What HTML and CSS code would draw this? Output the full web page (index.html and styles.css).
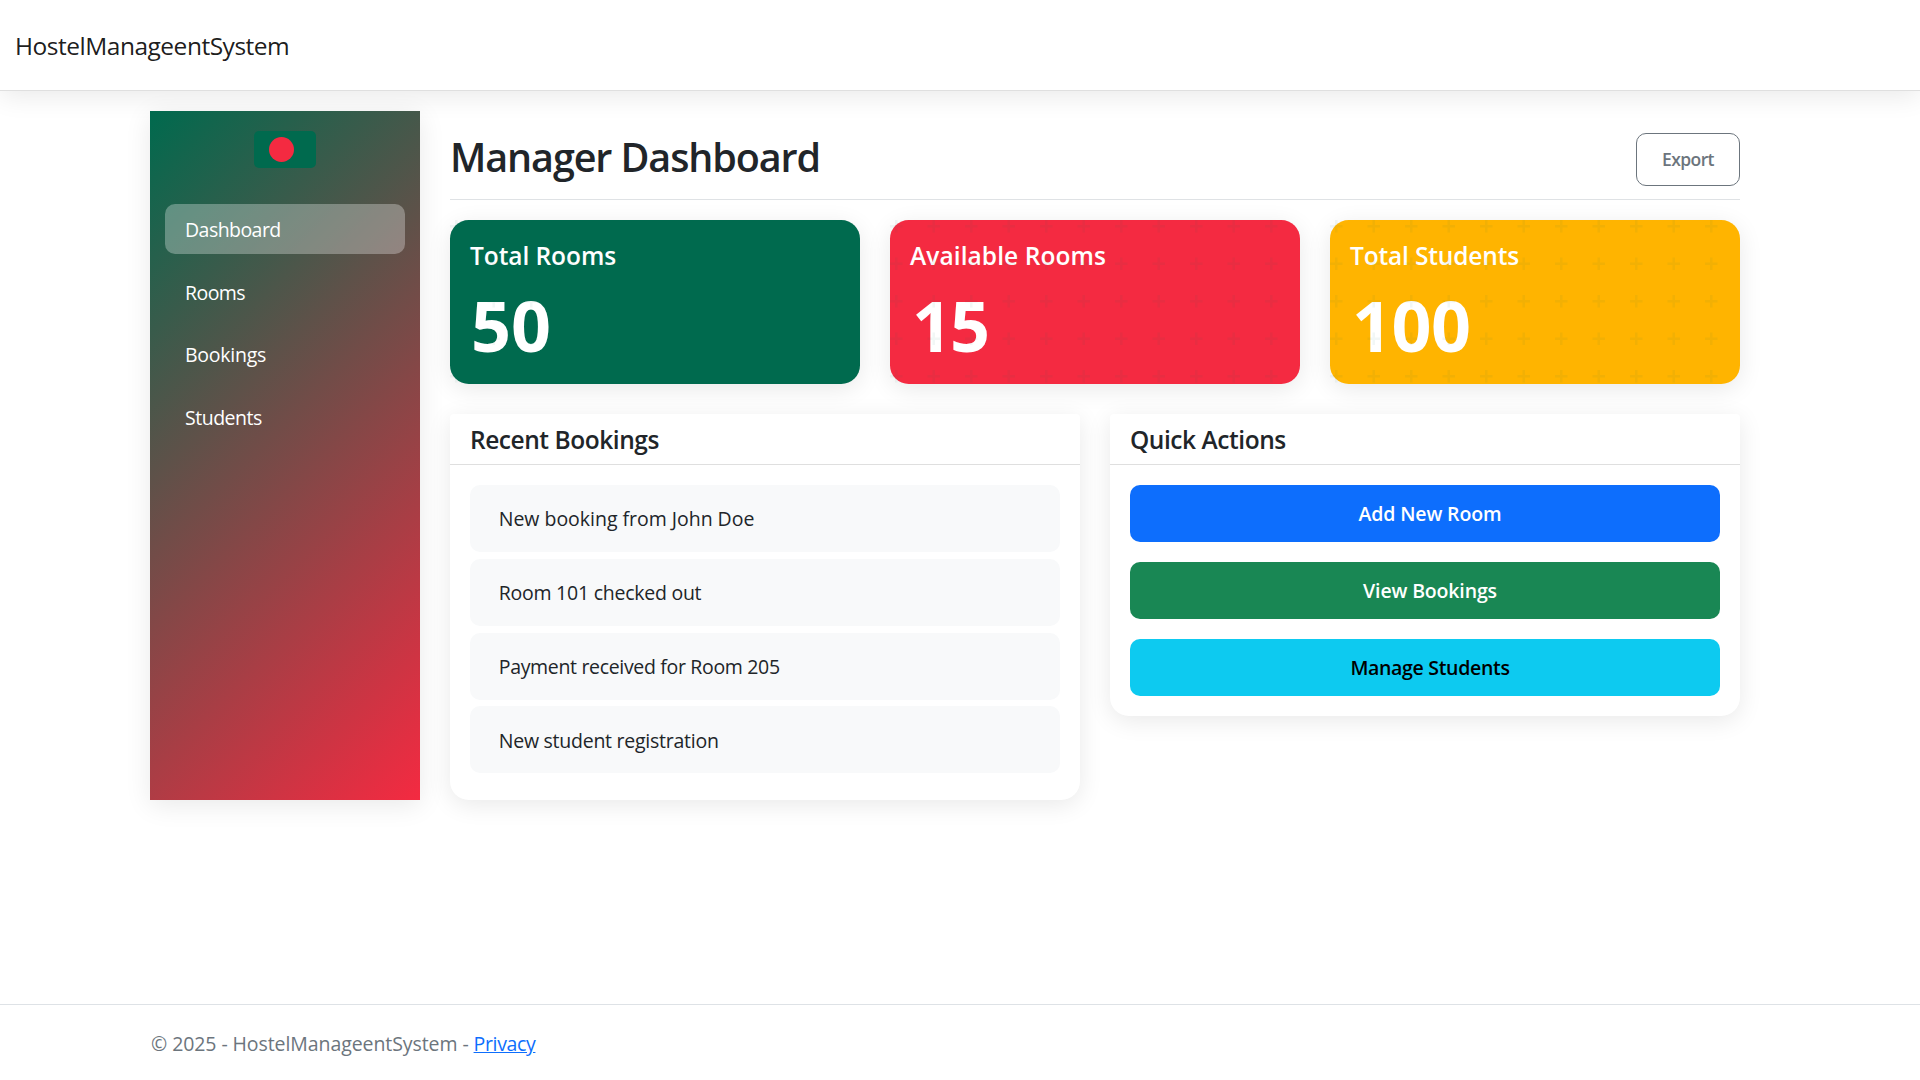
FILE: index.html
```
<!DOCTYPE html>
<html lang="en">
<head>
<meta charset="utf-8">
<title>Manager Dashboard - HostelManageentSystem</title>
<link rel="stylesheet" href="styles.css">
</head>
<body>
<header class="topbar"><a class="brand" href="#">HostelManageentSystem</a></header>
<div class="container">
  <aside class="sidebar">
    <div class="flag"><span class="flag-disc"></span></div>
    <nav class="nav">
      <a class="nav-link active" href="#">Dashboard</a>
      <a class="nav-link" href="#">Rooms</a>
      <a class="nav-link nav-bookings" href="#">Bookings</a>
      <a class="nav-link nav-students" href="#">Students</a>
    </nav>
  </aside>
  <main class="main">
    <div class="page-head">
      <h1 class="page-title">Manager Dashboard</h1>
      <button class="btn-export" type="button">Export</button>
    </div>
    <section class="stats">
      <div class="stat stat-green">
        <h5 class="stat-title">Total Rooms</h5>
        <p class="stat-value">50</p>
      </div>
      <div class="stat stat-red">
        <h5 class="stat-title">Available Rooms</h5>
        <p class="stat-value">15</p>
      </div>
      <div class="stat stat-yellow">
        <h5 class="stat-title">Total Students</h5>
        <p class="stat-value">100</p>
      </div>
    </section>
    <section class="panels">
      <div class="panel">
        <h5 class="panel-title">Recent Bookings</h5>
        <ul class="list">
          <li class="list-item item-booking">New booking from John Doe</li>
          <li class="list-item">Room 101 checked out</li>
          <li class="list-item item-payment">Payment received for Room 205</li>
          <li class="list-item">New student registration</li>
        </ul>
      </div>
      <div class="panel">
        <h5 class="panel-title">Quick Actions</h5>
        <div class="actions">
          <button class="btn btn-primary" type="button">Add New Room</button>
          <button class="btn btn-success" type="button">View Bookings</button>
          <button class="btn btn-info" type="button">Manage Students</button>
        </div>
      </div>
    </section>
  </main>
</div>
<footer class="footer">
  <div class="footer-inner">© 2025 - HostelManageentSystem - <a class="footer-link" href="#">Privacy</a></div>
</footer>
</body>
</html>
```
FILE: styles.css
```
:root {
  --green: #006a4e;
  --red: #f42a41;
  --yellow: #ffb400;
  --shadow: 0 5px 25px rgba(0, 0, 0, .09);
}
* { box-sizing: border-box; }
body {
  margin: 0;
  height: 1080px;
  display: flex;
  flex-direction: column;
  background: #fff;
  color: #212529;
  font-family: "Open Sans", "Noto Sans", sans-serif;
  font-size: 19.5px;
  line-height: 30px;
}
h1, h5, p, ul { margin: 0; padding: 0; }
h1, h5 { font-weight: 600; }
button { font-family: inherit; cursor: pointer; }

.topbar {
  height: 91px;
  padding: 2px 15px 0;
  display: flex;
  align-items: center;
  border-bottom: 1px solid #dfdfdf;
  box-shadow: var(--shadow);
}
.brand {
  color: rgba(0, 0, 0, .9);
  font-size: 24.5px;
  letter-spacing: -.49px;
  text-decoration: none;
}

.container {
  width: 1590px;
  margin: 20px auto 0 150px;
  display: flex;
  gap: 30px;
}
.sidebar {
  width: 270px;
  height: 689px;
  flex: none;
  padding: 20px 15px;
  background: linear-gradient(135deg, var(--green), var(--red));
  box-shadow: var(--shadow);
}
.flag {
  width: 62px;
  height: 37px;
  margin: 0 auto 36px;
  padding-left: 15.4px;
  display: flex;
  align-items: center;
  border-radius: 5px;
  background: var(--green);
}
.flag-disc {
  width: 25px;
  height: 25px;
  border-radius: 50%;
  background: var(--red);
}
.nav { display: flex; flex-direction: column; gap: 12.5px; }
.nav-link {
  height: 50px;
  padding: 11px 20px 9px;
  border-radius: 10px;
  color: #fff;
  letter-spacing: -.55px;
  text-decoration: none;
}
.nav-link.active { background: rgba(255, 255, 255, .3); }
.nav-bookings { letter-spacing: -.25px; }
.nav-students { letter-spacing: -.48px; }

.main { flex: 1; padding-top: 22px; }
.page-head {
  height: 67px;
  display: flex;
  justify-content: space-between;
  align-items: flex-start;
  border-bottom: 1px solid #dfe2e5;
}
.page-title {
  font-size: 39.5px;
  line-height: 48px;
  letter-spacing: -1.1px;
}
.btn-export {
  width: 104px;
  height: 53px;
  padding: 0 0 1px;
  border: 1px solid #6c757d;
  border-radius: 10px;
  background: #fff;
  color: #6c757d;
  font-size: 17.5px;
  font-weight: 600;
  letter-spacing: -.6px;
}

.stats {
  margin-top: 20px;
  display: grid;
  grid-template-columns: repeat(3, 1fr);
  gap: 30px;
}
.stat {
  position: relative;
  height: 164px;
  padding: 21px 20px 17px;
  border-radius: 18.75px;
  box-shadow: var(--shadow);
  color: #fff;
}
.stat::before {
  content: "";
  position: absolute;
  inset: 0;
  background: url("data:image/svg+xml,%3Csvg xmlns='http://www.w3.org/2000/svg' width='75' height='75' viewBox='0 0 60 60'%3E%3Cpath fill='%23006a4e' fill-opacity='.05' d='M36 34v-4h-2v4h-4v2h4v4h2v-4h4v-2h-4zm0-30V0h-2v4h-4v2h4v4h2V6h4V4h-4zM6 34v-4H4v4H0v2h4v4h2v-4h4v-2H6zM6 4V0H4v4H0v2h4v4h2V6h4V4H6z'/%3E%3C/svg%3E");
}
.stat-green { background: var(--green); }
.stat-red { background: var(--red); }
.stat-yellow { background: var(--yellow); }
.stat-title {
  font-size: 24.5px;
  letter-spacing: -.06px;
}
.stat-red .stat-title { letter-spacing: .08px; }
.stat-yellow .stat-title { letter-spacing: -.15px; }
.stat-value {
  margin-top: 12px;
  padding-left: 1px;
  font-size: 70px;
  font-weight: 700;
  line-height: 84px;
}
.stat-red .stat-value { padding-left: 2px; letter-spacing: -2px; }
.stat-yellow .stat-value { padding-left: 2px; letter-spacing: -.5px; }

.panels {
  margin-top: 30px;
  display: grid;
  grid-template-columns: repeat(2, 1fr);
  align-items: start;
  gap: 30px;
}
.panel {
  background: #fff;
  border-radius: 4px 4px 18.75px 18.75px;
  box-shadow: var(--shadow);
}
.panel-title {
  height: 51px;
  padding: 11px 20px 9px;
  border-bottom: 1px solid #dfdfdf;
  font-size: 24.5px;
  letter-spacing: -.45px;
}
.list {
  padding: 20px 20px 27px;
  display: grid;
  gap: 6.75px;
  list-style: none;
}
.list-item {
  height: 67px;
  padding: 19.25px 28.75px 17.75px;
  border-radius: 10px;
  background: #f8f9fa;
  letter-spacing: -.25px;
}
.item-booking { letter-spacing: -.02px; }
.item-payment { letter-spacing: -.33px; }
.actions { padding: 20px; display: grid; gap: 20px; }
.btn {
  height: 57px;
  padding: 0 0 0 10px;
  border: 0;
  border-radius: 10px;
  color: #fff;
  font-size: 19.5px;
  font-weight: 600;
  letter-spacing: -.15px;
}
.btn-primary { background: #0d6efd; }
.btn-success { background: #198754; }
.btn-info { background: #0dcaf0; color: #000; letter-spacing: -.31px; }

.footer { margin-top: auto; height: 76px; border-top: 1px solid #dee2e6; }
.footer-inner {
  padding: 2px 0 0 151px;
  line-height: 73px;
  color: #6c757d;
  letter-spacing: -.08px;
}
.footer-link { color: #0d6efd; letter-spacing: -.35px; }
```
